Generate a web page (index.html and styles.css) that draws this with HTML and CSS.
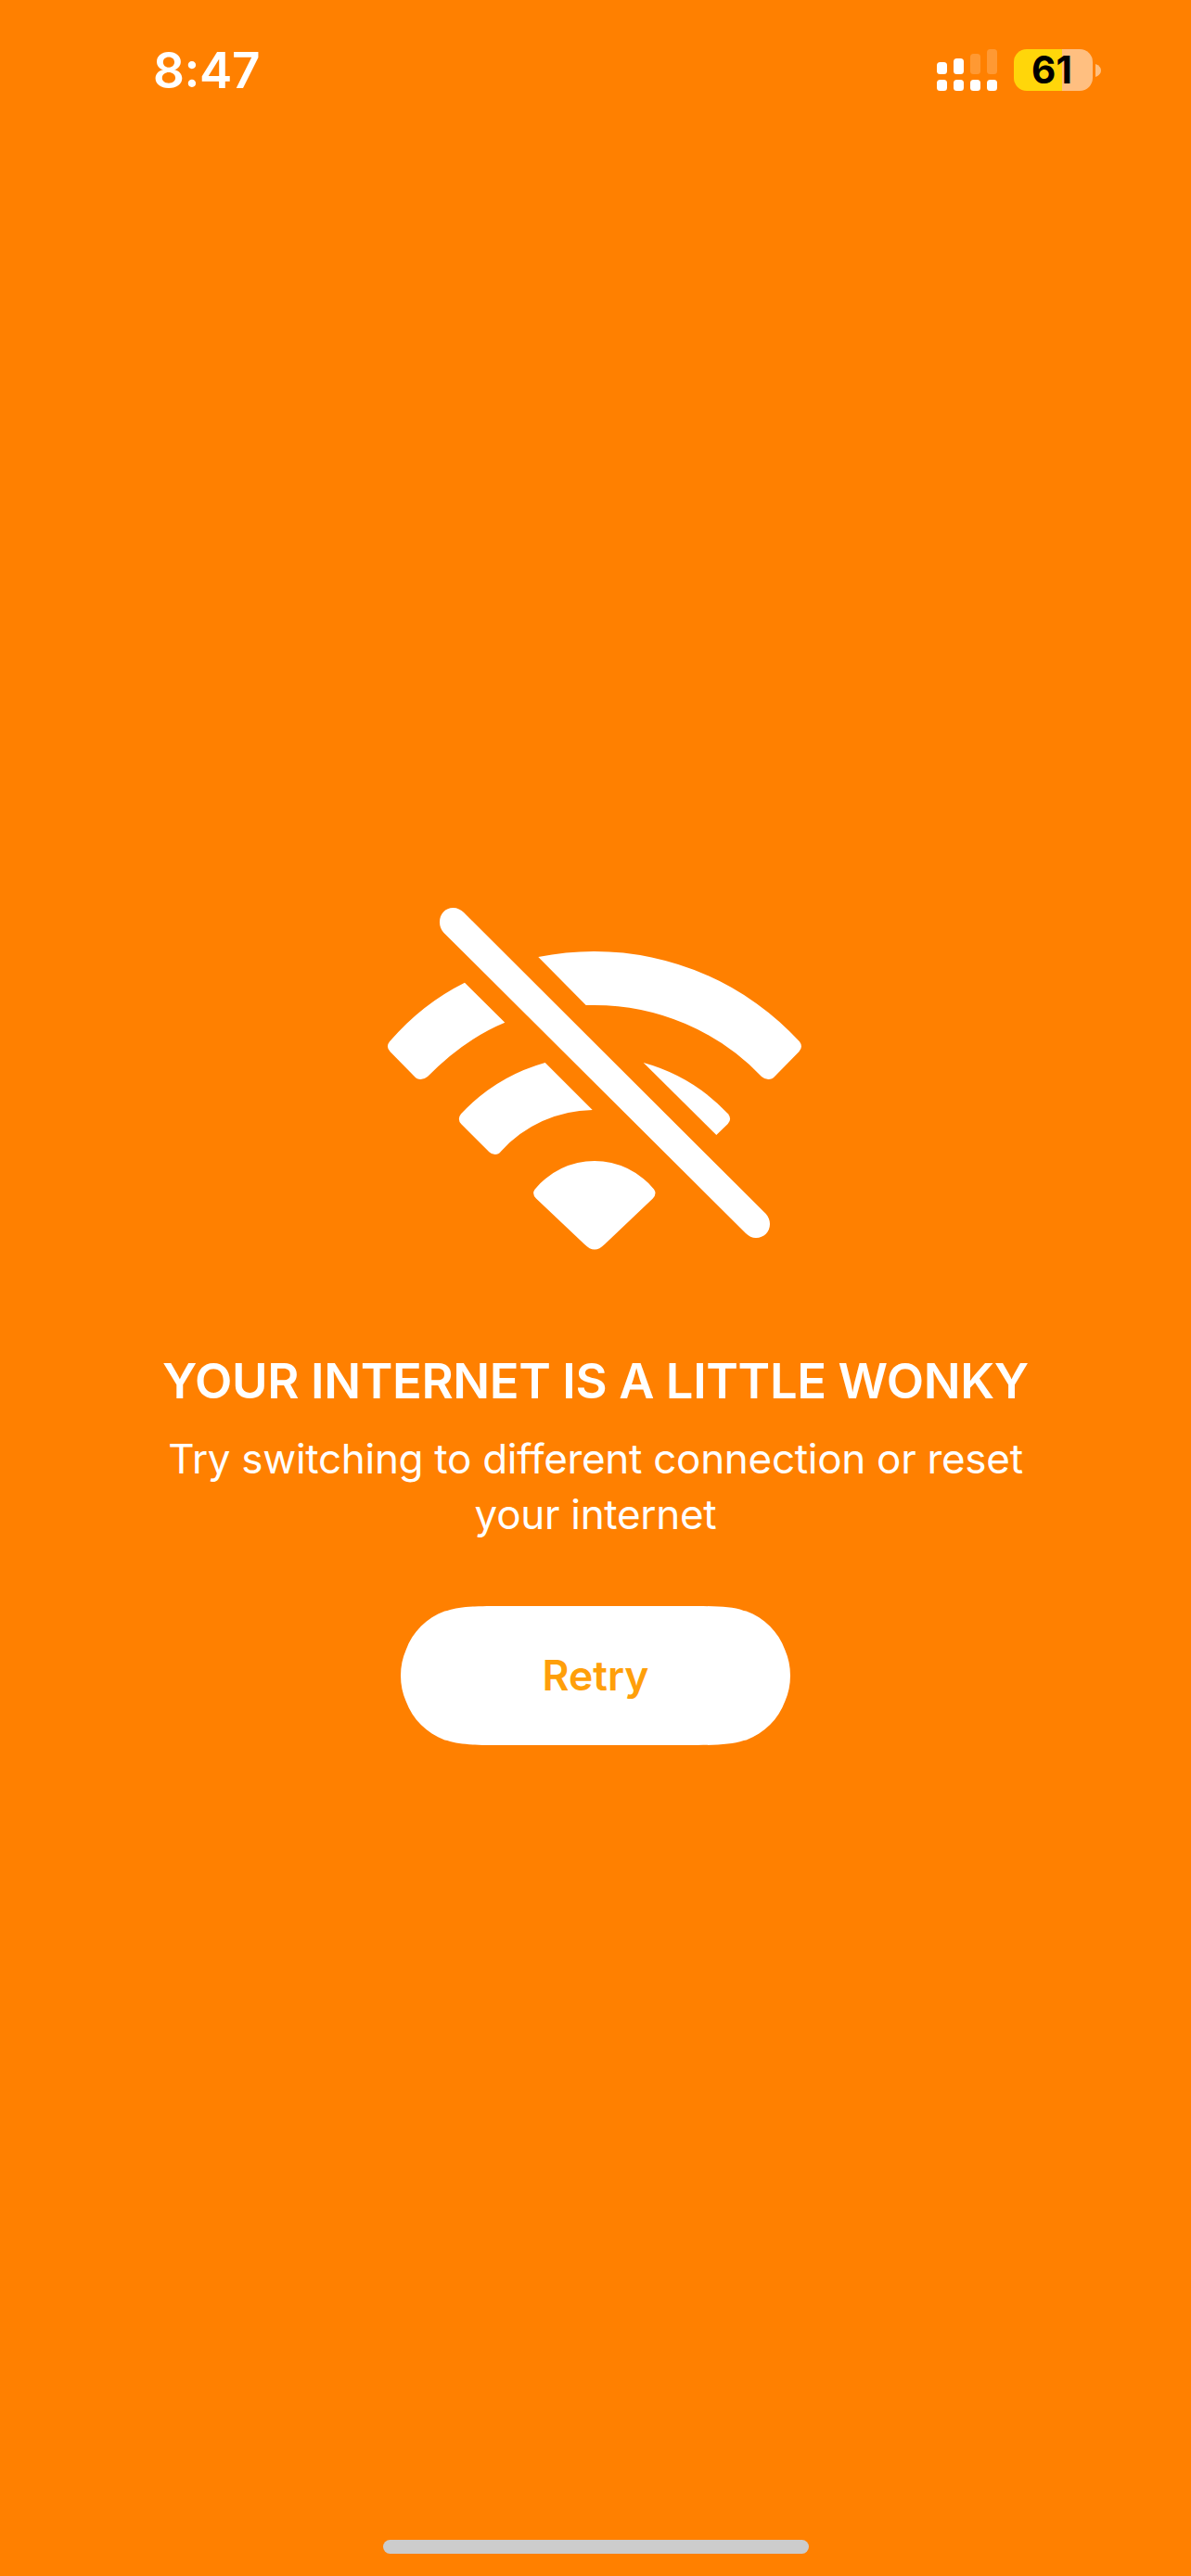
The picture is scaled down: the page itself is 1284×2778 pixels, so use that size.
FILE: index.html
```html
<!DOCTYPE html>
<html lang="en">
<head>
<meta charset="utf-8">
<title>No connection</title>
<link rel="stylesheet" href="styles.css">
</head>
<body>
<div class="screen">
  <header class="status-bar">
    <span class="time">8<span class="colon">:</span>47</span>
    <div class="indicators">
      <svg class="signal" viewBox="0 0 65 45" fill="#fff">
        <rect x="0" y="14" width="11" height="13" rx="3.5"/>
        <rect x="18" y="10" width="11" height="17" rx="3.5"/>
        <rect x="36" y="5" width="11" height="22" rx="3.5" opacity=".2"/>
        <rect x="54" y="0" width="11" height="27" rx="3.5" opacity=".2"/>
        <rect x="0" y="33" width="11" height="12" rx="3.5"/>
        <rect x="18" y="33" width="11" height="12" rx="3.5"/>
        <rect x="36" y="33" width="11" height="12" rx="3.5"/>
        <rect x="54" y="33" width="11" height="12" rx="3.5"/>
      </svg>
      <div class="battery"><span class="level">61</span></div>
      <svg class="battery-tip" viewBox="0 0 6 14"><path d="M0 0C4 1.500 6 4 6 7S4 12.500 0 14Z" fill="#ffbf80"/></svg>
    </div>
  </header>
  <main class="message">
    <svg class="wifi-off" viewBox="17 18 448 371" fill="#fff">
      <path d="M100 24L425.700 349C428.500 352 430 356 430 360C430 368.500 423.500 375 415 375C411 375 407 373 404 370L78.300 45.700C75.500 42.500 74 39 74 34.500C74 25.500 80 19 88.500 19C93 19 97 21 100 24Z"/>
      <path d="M101 99.700L144.300 142.700Q100 161 61 201Q57.500 204 53.500 204Q49.500 204 46.700 200.700L20.700 174.300Q15.500 169 20 163.300Q55 122.500 101 99.700Z"/>
      <path d="M180.300 72A303 303 0 0 1 240.900 66A300 300 0 0 1 462 163.300Q466.200 169 461.300 174.300L435.300 200.700Q432.500 204 428.300 204Q424.500 204 421 201A249 249 0 0 0 240.900 124L231.700 124Z"/>
      <path d="M187.700 186L238.700 237A136 136 0 0 0 140 281.700Q137.500 285 133.700 285Q130 285 127.300 282.300L97.300 252.300Q92.500 247 97 241.300A197 197 0 0 1 187.700 186Z"/>
      <path d="M293.700 186A197 197 0 0 1 385 241.300Q389.300 247 384.700 252L372.300 264Z"/>
      <path d="M176.700 322.500A83 83 0 0 1 240.900 292A83 83 0 0 1 305 322.500Q308.500 327.500 303.800 332.500L252 381.700C244 389.500 238 389.500 230 381.700L178 332.500Q173 327.500 176.700 322.500Z"/>
    </svg>
    <h1 class="title">YOUR INTERNET IS A LITTLE WONKY</h1>
    <p class="hint">Try switching to different connection or reset<br>your internet</p>
    <button class="retry">Retry</button>
  </main>
  <div class="home-indicator"></div>
</div>
</body>
</html>
```
FILE: styles.css
```css
* {
  box-sizing: border-box;
}

body {
  margin: 0;
  background: #ff8000;
  font-family: Inter, "Liberation Sans", sans-serif;
}

.screen {
  width: 1284px;
  height: 2778px;
  display: flex;
  flex-direction: column;
  align-items: center;
  padding-bottom: 24px;
  color: #fff;
  background: #ff8000;
}

.status-bar {
  width: 100%;
  height: 150px;
  display: flex;
  justify-content: space-between;
  align-items: flex-start;
  padding: 45px 97px 0 165px;
}

.time {
  font-size: 53px;
  line-height: 62px;
  font-weight: 600;
  letter-spacing: -0.400px;
}

.colon {
  display: inline-block;
  transform: translateY(-1px);
}

.indicators {
  display: flex;
  align-items: center;
  padding-top: 8px;
}

.signal {
  width: 65px;
  height: 45px;
}

.battery {
  width: 85px;
  height: 45px;
  margin-left: 18px;
  padding-right: 3px;
  border-radius: 14px;
  background: linear-gradient(to right, #ffd60a 52px, #ffbf80 52px);
  color: #000;
  text-align: center;
}

.level {
  font-size: 40.500px;
  line-height: 45px;
  font-weight: 700;
}

.battery-tip {
  width: 6px;
  height: 14px;
  margin-left: 3px;
}

.message {
  display: flex;
  flex-direction: column;
  align-items: center;
  padding-top: 828px;
}

.wifi-off {
  width: 448px;
  height: 371px;
  margin-right: 2px;
}

.title {
  margin: 108px 0 0;
  font-size: 52.500px;
  line-height: 64px;
  font-weight: 600;
  letter-spacing: -0.370px;
  white-space: nowrap;
}

.hint {
  margin: 22px 0 0;
  font-size: 44px;
  line-height: 60px;
  font-weight: 400;
  letter-spacing: -0.300px;
  text-align: center;
  white-space: nowrap;
}

.retry {
  width: 420px;
  height: 150px;
  margin-top: 69px;
  padding: 0;
  border: 0;
  background: #fff;
  clip-path: path("M114.600 0C81.600 0 65.100 0 50.200 4.900L47.400 5.600C28 12.700 12.700 28 5.600 47.400C1.900 56 0 65 0 75C0 85 1.900 94 5.600 102.600C12.700 122 28 137.300 47.400 144.400L50.200 145.100C65.100 150 81.600 150 114.600 150H305.400C338.400 150 354.900 150 369.800 145.100L372.600 144.400C392 137.300 407.300 122 414.400 102.600C418.100 94 420 85 420 75C420 65 418.100 56 414.400 47.400C407.300 28 392 12.700 372.600 5.600L369.800 4.900C354.900 0 338.400 0 305.400 0Z");
  color: #ff9f0a;
  font: 600 44.500px/54px Inter, "Liberation Sans", sans-serif;
}

.home-indicator {
  width: 459px;
  height: 15px;
  margin-top: auto;
  border-radius: 8px;
  background: #ccc;
}
```
